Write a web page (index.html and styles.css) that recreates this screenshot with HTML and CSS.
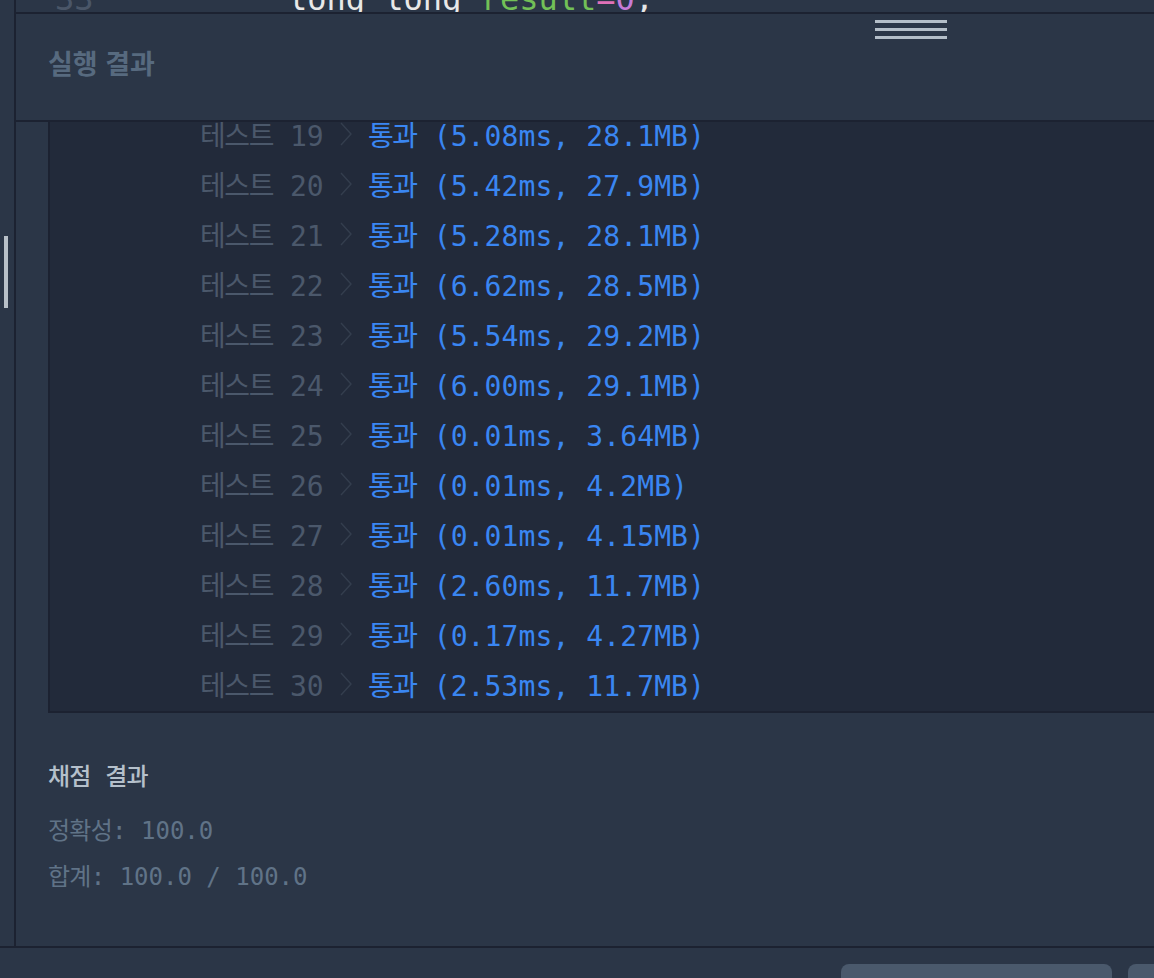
FILE: index.html
```html
<!DOCTYPE html>
<html lang="ko">
<head>
  <meta charset="UTF-8" />
  <meta name="viewport" content="width=device-width, initial-scale=1.0"/>
  <title>실행 결과</title>
  <link rel="stylesheet" href="styles.css">
</head>
<body>

  <div class="ide">
    <div class="side-strip">
      <div class="scroll-thumb"></div>
    </div>

    <div class="main">
      <div class="code-peek">
        <div class="code-line">
          <span class="line-no">33</span>
          <code><span class="kw">long long</span> <span class="var">result</span><span class="op">=</span><span class="num">0</span>;</code>
        </div>
      </div>

      <section class="result-panel">
        <header class="panel-head">
          <h2>실행 결과</h2>
          <div class="grip"><span></span><span></span><span></span></div>
        </header>

        <div class="output-box">
          <ul class="test-list" id="testList"></ul>
        </div>

        <div class="grading">
          <h3><span class="ko">채점</span> <span class="ko">결과</span></h3>
          <p><span class="ko">정확성</span>: 100.0</p>
          <p><span class="ko">합계</span>: 100.0 / 100.0</p>
        </div>
      </section>
    </div>
  </div>

  <footer class="bottom-bar">
    <div class="actions">
      <button class="btn"></button>
      <button class="btn"></button>
    </div>
  </footer>

  <script>
    const results = [
      [19, '5.08ms, 28.1MB'],
      [20, '5.42ms, 27.9MB'],
      [21, '5.28ms, 28.1MB'],
      [22, '6.62ms, 28.5MB'],
      [23, '5.54ms, 29.2MB'],
      [24, '6.00ms, 29.1MB'],
      [25, '0.01ms, 3.64MB'],
      [26, '0.01ms, 4.2MB'],
      [27, '0.01ms, 4.15MB'],
      [28, '2.60ms, 11.7MB'],
      [29, '0.17ms, 4.27MB'],
      [30, '2.53ms, 11.7MB']
    ];

    const list = document.getElementById('testList');
    results.forEach(([no, detail]) => {
      const li = document.createElement('li');
      li.className = 'test-row';
      li.innerHTML =
        '<span class="test-name"><span class="ko">테스트</span> ' + no + '</span>' +
        '<svg class="chev" width="12" height="24" viewBox="0 0 12 24"><path d="M1 1 L11 12 L1 23" fill="none" stroke="currentColor" stroke-width="1.4"/></svg>' +
        '<span class="test-pass"><span class="ko">통과</span> (' + detail + ')</span>';
      list.appendChild(li);
    });
  </script>
</body>
</html>
```

FILE: styles.css
```css
body {
  margin: 0;
  background-color: #2b3647;
  font-family: "DejaVu Sans Mono", "Noto Sans CJK KR", monospace;
  color: #e6e6e6;
  height: 978px;
  overflow: hidden;
}

.ko {
  letter-spacing: -0.03em;
}

.ide {
  display: flex;
  height: 946px;
  border-bottom: 2px solid #1c2231;
}

.side-strip {
  width: 14px;
  flex-shrink: 0;
  border-right: 2px solid #1c2231;
}

.scroll-thumb {
  width: 4px;
  height: 72px;
  margin: 236px 0 0 4px;
  background-color: #b8c0c8;
}

.main {
  flex: 1;
  display: flex;
  flex-direction: column;
  min-width: 0;
}

/* bottom edge of the code editor above */
.code-peek {
  height: 12px;
  overflow: hidden;
  border-bottom: 2px solid #1c2231;
}

.code-line {
  display: flex;
  font-size: 32px;
  line-height: 32px;
  margin-top: -17px;
  white-space: pre;
}

.line-no {
  width: 38px;
  margin-left: 39px;
  color: #4a5668;
}

.code-line code {
  font-family: inherit;
  margin-left: 195px;
}

.kw { color: #e8e8e8; }
.var { color: #72c057; }
.op { color: #e071b8; }
.num { color: #c67bd8; }

.result-panel {
  flex: 1;
  display: flex;
  flex-direction: column;
}

.panel-head {
  position: relative;
  height: 106px;
  display: flex;
  align-items: center;
  padding-left: 32px;
  border-bottom: 2px solid #1c2231;
}

.panel-head h2 {
  margin: 0;
  font-family: "Noto Sans CJK KR", sans-serif;
  font-size: 27px;
  font-weight: bold;
  color: #576a7f;
  padding-bottom: 10px;
}

.grip {
  position: absolute;
  top: 6px;
  left: 859px;
  width: 72px;
  display: flex;
  flex-direction: column;
  gap: 5px;
}

.grip span {
  height: 3px;
  background-color: #b4bec8;
}

.output-box {
  height: 589px;
  margin-left: 32px;
  overflow: hidden;
  background-color: #222a3a;
  border-left: 2px solid #1c2231;
  border-bottom: 2px solid #1c2231;
}

.test-list {
  list-style: none;
  margin: -13px 0 0;
  padding: 0 0 0 150px;
}

.test-row {
  display: flex;
  align-items: center;
  height: 50px;
  font-size: 28px;
  white-space: pre;
}

.test-row .ko {
  letter-spacing: -0.05em;
}

.test-name {
  width: 140px;
  color: #4b586b;
}

.chev {
  color: #343e4e;
  margin-right: 16px;
  flex-shrink: 0;
}

.test-pass {
  color: #3a86f2;
  letter-spacing: 0.1px;
}

.grading {
  flex: 1;
  padding: 46px 0 0 32px;
}

.grading h3 {
  margin: 0 0 13px;
  font-size: 24px;
  line-height: 36px;
  font-weight: 500;
  color: #b5c0cb;
  white-space: pre;
}

.grading p {
  margin: 0;
  font-size: 24px;
  line-height: 46px;
  color: #607387;
  white-space: pre;
}

.bottom-bar {
  display: flex;
  padding-top: 16px;
}

.actions {
  display: flex;
  gap: 16px;
  margin-left: auto;
  margin-right: -245px;
}

.btn {
  width: 271px;
  height: 48px;
  border: none;
  border-radius: 8px;
  background-color: #4a596c;
}
```
